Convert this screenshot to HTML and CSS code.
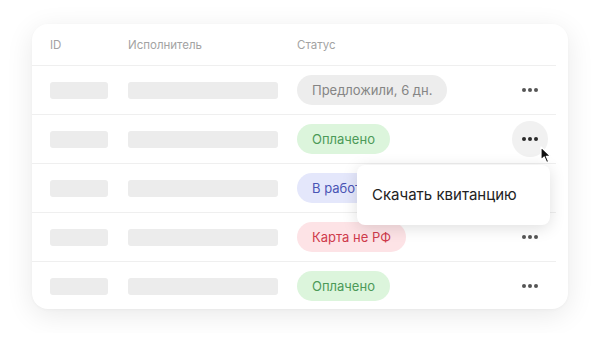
FILE: index.html
```html
<!DOCTYPE html>
<html lang="ru">
<head>
    <meta charset="UTF-8">
    <meta name="viewport" content="width=device-width, initial-scale=1.0">
    <title>Выплаты</title>
    <link rel="stylesheet" href="styles.css">
</head>
<body>
    <div class="card">
        <div class="row head">
            <div>ID</div>
            <div>Исполнитель</div>
            <div>Статус</div>
            <div></div>
        </div>
        <div class="row">
            <div class="skel id"></div>
            <div class="skel name"></div>
            <div><span class="pill gray">Предложили, 6 дн.</span></div>
            <div class="more"><span></span><span></span><span></span></div>
        </div>
        <div class="row">
            <div class="skel id"></div>
            <div class="skel name"></div>
            <div><span class="pill green">Оплачено</span></div>
            <div class="more active"><span></span><span></span><span></span></div>
        </div>
        <div class="row">
            <div class="skel id"></div>
            <div class="skel name"></div>
            <div><span class="pill blue">В работе</span></div>
            <div class="more"><span></span><span></span><span></span></div>
        </div>
        <div class="row">
            <div class="skel id"></div>
            <div class="skel name"></div>
            <div><span class="pill red">Карта не РФ</span></div>
            <div class="more"><span></span><span></span><span></span></div>
        </div>
        <div class="row last">
            <div class="skel id"></div>
            <div class="skel name"></div>
            <div><span class="pill green">Оплачено</span></div>
            <div class="more"><span></span><span></span><span></span></div>
        </div>

        <div class="menu">Скачать квитанцию</div>
        <svg class="cursor" width="12" height="18" viewBox="0 0 12 18">
            <path d="M1 1 L1 14 L4.2 11 L6.6 16.5 L8.6 15.6 L6.3 10.3 L10.6 10.3 Z" fill="#111" stroke="#fff" stroke-width="1.2" stroke-linejoin="round"/>
        </svg>
    </div>
</body>
</html>
```

FILE: styles.css
```css
body {
    margin: 0;
    padding: 24px 32px;
    background-color: #fff;
    font-family: Inter, "Noto Sans", sans-serif;
}
.card {
    position: relative;
    width: 536px;
    height: 285px;
    background-color: #fff;
    border-radius: 16px;
    box-shadow: 0 6px 28px rgba(0,0,0,0.09), 0 1px 3px rgba(0,0,0,0.03);
}
.row {
    display: grid;
    grid-template-columns: 78px 169px 1fr 36px;
    align-items: center;
    height: 48px;
    padding: 0 8px 0 18px;
    margin-right: 12px;
    border-bottom: 1px solid #efefef;
}
.row.head {
    height: 41px;
    font-size: 11.5px;
    color: #a3a3a3;
}
.row.last {
    border-bottom: none;
}
.skel {
    height: 17px;
    background-color: #ececec;
    border-radius: 3px;
}
.skel.id {
    width: 58px;
}
.skel.name {
    width: 150px;
}
.pill {
    display: inline-block;
    height: 30px;
    line-height: 30px;
    padding: 0 15px;
    border-radius: 15px;
    font-size: 13px;
}
.pill.gray {
    background-color: #ededed;
    color: #858585;
}
.pill.green {
    background-color: #dcf5dc;
    color: #4c9a58;
}
.pill.blue {
    background-color: #e4e7fb;
    color: #4a55b5;
}
.pill.red {
    background-color: #fde3e6;
    color: #cf3b4c;
}
.more {
    width: 36px;
    height: 36px;
    border-radius: 50%;
    display: flex;
    align-items: center;
    justify-content: center;
    gap: 2px;
}
.more span {
    width: 4px;
    height: 4px;
    border-radius: 50%;
    background-color: #555;
}
.more.active {
    background-color: #f1f1f1;
}
.more.active span {
    background-color: #2a2a2a;
}
.menu {
    position: absolute;
    left: 325px;
    top: 141px;
    width: 178px;
    height: 60px;
    padding-left: 15px;
    line-height: 60px;
    background-color: #fff;
    border-radius: 8px;
    box-shadow: 0 3px 16px rgba(0,0,0,0.13);
    font-size: 15px;
    color: #222;
}
.cursor {
    position: absolute;
    left: 508px;
    top: 122px;
}
```
